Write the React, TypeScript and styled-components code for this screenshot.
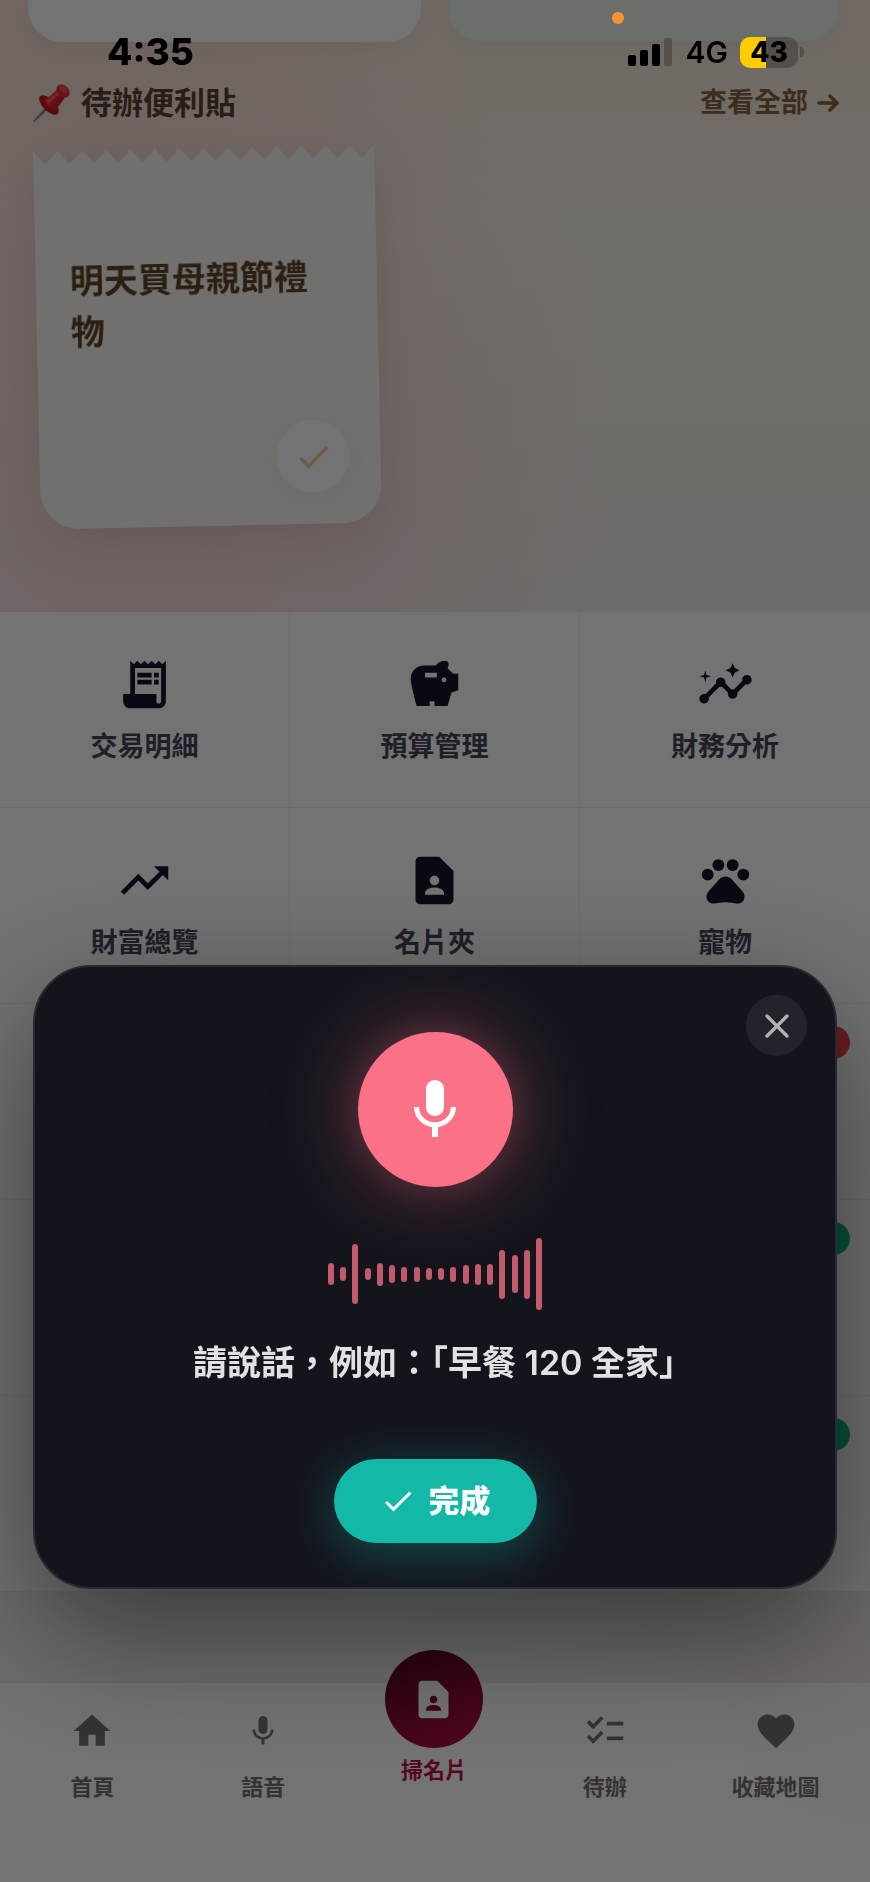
import React from "react";
import styled, { createGlobalStyle, css } from "styled-components";
import {
  MdCheck,
  MdChecklist,
  MdContactPage,
  MdFavorite,
  MdHome,
  MdInsights,
  MdReceiptLong,
  MdSavings,
  MdTrendingUp,
} from "react-icons/md";
import { X } from "lucide-react";

const GlobalStyle = createGlobalStyle`
  *, *::before, *::after { box-sizing: border-box; }
  body {
    margin: 0;
    font-family: Inter, "Noto Sans CJK TC", sans-serif;
    background: #fbf0e8;
  }
  button { font: inherit; color: inherit; border: 0; padding: 0; background: none; cursor: pointer; }
  a { color: inherit; text-decoration: none; }
  svg { display: block; flex: none; }
`;

const Page = styled.div`
  position: relative;
  display: flex;
  flex-direction: column;
  min-height: 100vh;
  overflow: hidden;
  background:
    radial-gradient(ellipse 460px 460px at 18% 430px, rgba(243, 208, 208, 0.75), transparent),
    radial-gradient(ellipse 400px 300px at 10% 100px, rgba(248, 218, 208, 0.5), transparent),
    radial-gradient(ellipse 500px 320px at 100% 92%, rgba(248, 216, 214, 0.5), transparent),
    linear-gradient(180deg, #faeadf 0, #fbf2e8 230px, #f3ece6 620px, #f2f1f1 1400px);
`;

/* ---------- status bar ---------- */

const StatusBar = styled.div`
  position: fixed;
  inset: 0 0 auto 0;
  z-index: 3;
  display: flex;
  justify-content: space-between;
  align-items: center;
  height: 70px;
  padding: 34px 66px 0 107px;
  color: #000;
`;

const Clock = styled.span`
  font-size: 37px;
  line-height: 36px;
  font-weight: 800;
`;

const StatusIcons = styled.div`
  display: flex;
  align-items: center;
`;

const Signal = styled.div`
  display: flex;
  align-items: flex-end;
  gap: 4px;
  height: 28px;
  margin-right: 14px;
`;

const SignalBar = styled.i<{ $height: number; $off?: boolean }>`
  width: 8px;
  height: ${(p) => p.$height}px;
  border-radius: 2px;
  background: ${(p) => (p.$off ? "rgba(0,0,0,0.24)" : "#000")};
`;

const Network = styled.span`
  margin-right: 12px;
  font-size: 30px;
  line-height: 32px;
  font-weight: 600;
`;

const Battery = styled.span`
  width: 58px;
  height: 31px;
  border-radius: 10px;
  background: linear-gradient(90deg, #fc0 26px, rgba(0, 0, 0, 0.24) 26px);
  font-size: 28px;
  line-height: 31px;
  font-weight: 800;
  text-align: center;
`;

const BatteryCap = styled.i`
  width: 4px;
  height: 10px;
  margin-left: 2px;
  border-radius: 0 4px 4px 0;
  background: rgba(0, 0, 0, 0.24);
`;

const MicInUseDot = styled.i`
  position: absolute;
  top: 12px;
  right: 246px;
  width: 12px;
  height: 12px;
  border-radius: 50%;
  background: #ff9230;
`;

/* ---------- memo section ---------- */

const Cards = styled.div`
  display: grid;
  grid-template-columns: 1fr 1fr;
  gap: 26px;
  padding: 0 30px 0 28px;
`;

const SummaryCard = styled.div<{ $tinted?: boolean }>`
  height: 42px;
  border-radius: 0 0 34px 34px;
  background: #fff;
  box-shadow: 0 4px 26px rgba(120, 80, 40, 0.1);
  ${(p) =>
    p.$tinted &&
    css`
      background: #ecf5ef;
      border: 2px solid #e0efe9;
      border-top: 0;
    `}
`;

const MemoSection = styled.section`
  padding: 36px 31px 86px;
`;

const MemoHeader = styled.div`
  display: flex;
  justify-content: space-between;
  align-items: center;
  height: 50px;
`;

const MemoTitle = styled.h2`
  display: flex;
  align-items: center;
  gap: 10px;
  margin: 0;
  font-size: 31px;
  line-height: 48px;
  font-weight: 700;
  color: #5d4037;
`;

const SeeAll = styled.a`
  display: flex;
  align-items: center;
  gap: 7px;
  font-size: 27px;
  line-height: 48px;
  font-weight: 700;
  color: #866440;
`;

const Note = styled.article`
  width: 341px;
  margin: 20px 0 0 6px;
  transform: rotate(-1.2deg);
  filter: drop-shadow(0 16px 26px rgba(90, 40, 40, 0.14));
`;

const NoteBody = styled.div`
  display: flex;
  flex-direction: column;
  justify-content: space-between;
  height: 364px;
  padding: 91px 31px 31px 34px;
  border-radius: 0 0 38px 38px;
  background: #fbf9f4;
`;

const NoteText = styled.p`
  margin: 0;
  padding-right: 8px;
  font-size: 34px;
  line-height: 51px;
  font-weight: 700;
  color: #5f4529;
`;

const NoteDone = styled.button`
  display: grid;
  place-items: center;
  align-self: flex-end;
  width: 73px;
  height: 73px;
  border-radius: 50%;
  background: #fff;
  box-shadow: 0 4px 26px rgba(60, 40, 20, 0.08);
  color: #efca9c;
`;

/* ---------- feature grid ---------- */

const Grid = styled.div`
  display: grid;
  grid-template-columns: repeat(3, 1fr);
  grid-auto-rows: 196px;
`;

const Cell = styled.a`
  position: relative;
  display: flex;
  flex-direction: column;
  align-items: center;
  justify-content: center;
  gap: 18px;
  background: #fefefe;
  border-right: 1px solid #f0f0f3;
  border-bottom: 1px solid #f0f0f3;
  color: #16162b;
  &:nth-child(3n) {
    border-right: 0;
  }
`;

const CellLabel = styled.span`
  font-size: 27px;
  line-height: 32px;
  font-weight: 600;
  color: #46465a;
`;

const Badge = styled.i<{ $color: string }>`
  position: absolute;
  top: 22px;
  right: 20px;
  width: 72px;
  height: 33px;
  border-radius: 17px;
  background: ${(p) => p.$color};
`;

/* ---------- bottom navigation ---------- */

const Nav = styled.nav`
  display: grid;
  grid-template-columns: repeat(5, 1fr);
  margin-top: auto;
  padding: 26px 9px 81px 7px;
  border-top: 1px solid #f3e6e8;
  background: rgba(255, 255, 255, 0.92);
`;

const NavItem = styled.a<{ $main?: boolean }>`
  display: flex;
  flex-direction: column;
  align-items: center;
  gap: ${(p) => (p.$main ? 8 : 20)}px;
  font-size: 22px;
  line-height: 28px;
  font-weight: ${(p) => (p.$main ? 700 : 600)};
  color: ${(p) => (p.$main ? "#b8104a" : "#767072")};
`;

const NavIcon = styled.span`
  display: grid;
  place-items: center;
  height: 44px;
`;

const ScanIcon = styled.span`
  display: grid;
  place-items: center;
  width: 98px;
  height: 98px;
  margin-top: -59px;
  border-radius: 50%;
  background: linear-gradient(155deg, #5e0622 10%, #b00d40 90%);
  color: #fff;
`;

/* ---------- voice dialog ---------- */

const Overlay = styled.div`
  position: fixed;
  inset: 0;
  z-index: 2;
  display: flex;
  align-items: flex-end;
  padding: 0 33px 293px;
  background: rgba(0, 0, 0, 0.55);
`;

const Dialog = styled.div`
  position: relative;
  display: flex;
  flex-direction: column;
  align-items: center;
  width: 100%;
  padding: 65px 0 44px;
  border: 2px solid #292930;
  border-radius: 58px;
  background: #14141c;
  box-shadow: 0 44px 132px rgba(0, 0, 0, 0.5);
`;

const Close = styled.button`
  position: absolute;
  top: 28px;
  right: 28px;
  display: grid;
  place-items: center;
  width: 61px;
  height: 61px;
  border-radius: 50%;
  background: #23232b;
  color: #b3b3b6;
`;

const MicButton = styled.button`
  display: grid;
  place-items: center;
  width: 155px;
  height: 155px;
  border-radius: 50%;
  background: #fb7185;
  box-shadow:
    0 0 88px rgba(251, 113, 133, 0.4),
    0 0 32px rgba(251, 113, 133, 0.15);
  color: #fff;
`;

const Wave = styled.div`
  display: flex;
  align-items: center;
  justify-content: space-between;
  width: 214px;
  height: 72px;
  margin-top: 51px;
`;

const WaveBar = styled.i`
  width: 6px;
  border-radius: 3px;
  background: #c25a6b;
`;

const Hint = styled.p`
  margin: 29px 0 72px;
  padding-left: 16px;
  font-size: 34px;
  line-height: 48px;
  font-weight: 600;
  color: #e2e2e4;
`;

const Done = styled.button`
  display: flex;
  align-items: center;
  gap: 13px;
  height: 84px;
  padding: 0 46px;
  border-radius: 42px;
  background: #14b8a6;
  box-shadow: 0 10px 52px rgba(20, 184, 166, 0.36);
  font-size: 31px;
  line-height: 40px;
  font-weight: 800;
  color: #fff;
`;

/* ---------- drawings ---------- */

type GlyphProps = { size: number };

const MicGlyph = ({ size }: GlyphProps) => (
  <svg width={size} height={size} viewBox="0 0 24 24" fill="currentColor" aria-hidden="true">
    <path d="M12 14c1.66 0 2.99-1.34 2.99-3L15 5c0-1.66-1.34-3-3-3S9 3.34 9 5v6c0 1.66 1.34 3 3 3zm5.3-3c0 3-2.54 5.1-5.3 5.1S6.7 14 6.7 11H5c0 3.41 2.72 6.23 6 6.72V21h2v-3.28c3.28-.48 6-3.3 6-6.72h-1.7z" />
  </svg>
);

const PawGlyph = ({ size }: GlyphProps) => (
  <svg width={size} height={size} viewBox="0 0 24 24" fill="currentColor" aria-hidden="true">
    <circle cx="4.5" cy="9.5" r="2.5" />
    <circle cx="9" cy="5.5" r="2.5" />
    <circle cx="15" cy="5.5" r="2.5" />
    <circle cx="19.5" cy="9.5" r="2.5" />
    <path d="M12 10.3c1 0 1.9.4 2.6 1.2l4.5 5c.6.7.9 1.4.9 2.3 0 1.7-1.3 3-3 2.9-1.7-.1-3-.5-5-.5s-3.3.4-5 .5c-1.7.1-3-1.2-3-2.9 0-.9.3-1.6.9-2.3l4.5-5c.7-.8 1.6-1.2 2.6-1.2z" />
  </svg>
);

const Pushpin = () => (
  <svg width="40" height="40" viewBox="0 0 40 40" aria-hidden="true">
    <defs>
      <linearGradient id="pinBody" x1="0" y1="0" x2="1" y2="1">
        <stop offset="0" stopColor="#ff5a52" />
        <stop offset="0.5" stopColor="#e8242c" />
        <stop offset="1" stopColor="#b3121c" />
      </linearGradient>
    </defs>
    <path d="M15.5 22.5 18 25 3 39 1.5 38.5z" fill="#8fa3b5" />
    <path d="M16.5 24 18 25 3 39z" fill="#5b6b7a" />
    <ellipse cx="18" cy="22" rx="12.5" ry="6" transform="rotate(45 18 22)" fill="#c41a22" />
    <path d="M14 17 27 6l8 7-10 14c-4 0-11-6-11-10z" fill="url(#pinBody)" />
    <path d="M16 18 27 8l2 2-11 11z" fill="#ff7d74" opacity="0.6" />
    <ellipse cx="32" cy="8" rx="7.5" ry="5.5" transform="rotate(45 32 8)" fill="#e32d32" />
    <ellipse cx="32.5" cy="6.5" rx="5" ry="3" transform="rotate(45 32.5 6.5)" fill="#f5504c" />
  </svg>
);

const Arrow = () => (
  <svg
    width="24"
    height="24"
    viewBox="0 0 24 24"
    fill="none"
    stroke="currentColor"
    strokeWidth="3.5"
    strokeLinecap="round"
    strokeLinejoin="round"
    aria-hidden="true"
  >
    <path d="M4 12h18M15 5l7 7-7 7" />
  </svg>
);

const TEETH = 14;
const tornEdge = Array.from({ length: TEETH }, (_, i) => `L${i * 2 + 1} 13 L${i * 2 + 2} 0`).join(" ");

const TornEdge = () => (
  <svg width="100%" height="14" viewBox={`0 0 ${TEETH * 2} 14`} preserveAspectRatio="none" aria-hidden="true">
    <path d={`M0 0 ${tornEdge} V14 H0z`} fill="#fbf9f4" />
  </svg>
);

/* ---------- data ---------- */

const FEATURES = [
  { label: "交易明細", Icon: MdReceiptLong },
  { label: "預算管理", Icon: MdSavings },
  { label: "財務分析", Icon: MdInsights },
  { label: "財富總覽", Icon: MdTrendingUp },
  { label: "名片夾", Icon: MdContactPage },
  { label: "寵物", Icon: PawGlyph },
];

const BADGES = ["#ef4444", "#10b981", "#10b981"];

const LEVELS = [22, 14, 60, 12, 23, 18, 15, 15, 12, 12, 15, 19, 21, 21, 49, 38, 49, 72];

export default function App() {
  return (
    <>
      <GlobalStyle />
      <StatusBar>
        <MicInUseDot />
        <Clock>4:35</Clock>
        <StatusIcons>
          <Signal>
            <SignalBar $height={11} />
            <SignalBar $height={16} />
            <SignalBar $height={22} />
            <SignalBar $height={28} $off />
          </Signal>
          <Network>4G</Network>
          <Battery>43</Battery>
          <BatteryCap />
        </StatusIcons>
      </StatusBar>

      <Page>
        <Cards>
          <SummaryCard />
          <SummaryCard $tinted />
        </Cards>

        <MemoSection>
          <MemoHeader>
            <MemoTitle>
              <Pushpin />
              待辦便利貼
            </MemoTitle>
            <SeeAll href="#memos">
              查看全部
              <Arrow />
            </SeeAll>
          </MemoHeader>
          <Note>
            <TornEdge />
            <NoteBody>
              <NoteText>明天買母親節禮物</NoteText>
              <NoteDone aria-label="完成待辦">
                <MdCheck size={40} />
              </NoteDone>
            </NoteBody>
          </Note>
        </MemoSection>

        <Grid>
          {FEATURES.map(({ label, Icon }) => (
            <Cell key={label} href="#feature">
              <Icon size={57} />
              <CellLabel>{label}</CellLabel>
            </Cell>
          ))}
          {BADGES.map((color, i) => (
            <React.Fragment key={i}>
              <Cell as="div" />
              <Cell as="div" />
              <Cell as="div">
                <Badge $color={color} />
              </Cell>
            </React.Fragment>
          ))}
        </Grid>

        <Nav>
          <NavItem href="#home">
            <NavIcon>
              <MdHome size={44} />
            </NavIcon>
            首頁
          </NavItem>
          <NavItem href="#voice">
            <NavIcon>
              <MicGlyph size={36} />
            </NavIcon>
            語音
          </NavItem>
          <NavItem href="#scan" $main>
            <ScanIcon>
              <MdContactPage size={45} />
            </ScanIcon>
            掃名片
          </NavItem>
          <NavItem href="#todo">
            <NavIcon>
              <MdChecklist size={44} />
            </NavIcon>
            待辦
          </NavItem>
          <NavItem href="#map">
            <NavIcon>
              <MdFavorite size={44} />
            </NavIcon>
            收藏地圖
          </NavItem>
        </Nav>
      </Page>

      <Overlay>
        <Dialog role="dialog" aria-modal="true" aria-labelledby="voice-hint">
          <Close aria-label="關閉">
            <X size={40} strokeWidth={2} />
          </Close>
          <MicButton aria-label="錄音">
            <MicGlyph size={72} />
          </MicButton>
          <Wave aria-hidden="true">
            {LEVELS.map((level, i) => (
              <WaveBar key={i} style={{ height: level }} />
            ))}
          </Wave>
          <Hint id="voice-hint">請說話，例如：「早餐 120 全家」</Hint>
          <Done>
            <MdCheck size={36} />
            完成
          </Done>
        </Dialog>
      </Overlay>
    </>
  );
}
